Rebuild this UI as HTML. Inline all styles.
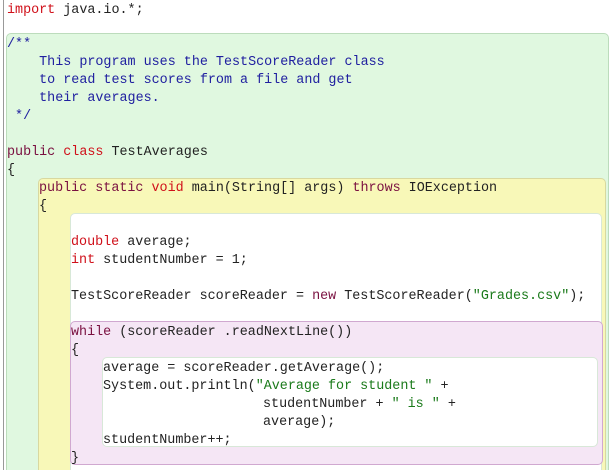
<!DOCTYPE html>
<html style="overflow:hidden;height:470px"><head><style>
body{margin:0;width:609px;height:470px;overflow:hidden;background:#fff;position:relative;font-family:"Liberation Mono",monospace;font-size:13.4px;color:#222}
.b{position:absolute;border-radius:5px;box-sizing:border-box}
.l{position:absolute;white-space:pre;line-height:18px;height:18px}
.k{color:#d0101a}.m{color:#7a1040}.c{color:#2020a0}.s{color:#1a7a1a}
</style></head><body>
<div style="position:absolute;left:3px;top:0;width:1px;height:470px;background:#999"></div>
<div class="b" style="left:6px;top:33px;width:603px;height:445px;background:#e0f8e0;border:1px solid #bcdcbc"></div>
<div class="b" style="left:38px;top:178px;width:568px;height:300px;background:#f8f8b8;border:1px solid #d8d8a0"></div>
<div class="b" style="left:70px;top:213px;width:532px;height:265px;background:#fff;border:1px solid #d8e8d8"></div>
<div class="b" style="left:70px;top:321px;width:533px;height:144px;background:#f5e6f5;border:1px solid #d0a8d0"></div>
<div class="b" style="left:102px;top:357px;width:496px;height:90px;background:#fff;border:1px solid #d8e8d8"></div>

<div class="l" style="left:7px;top:2px"><span class="k">import</span> java.io.*;</div>
<div class="l c" style="left:7px;top:36px">/**</div>
<div class="l c" style="left:7px;top:54px">    This program uses the TestScoreReader class</div>
<div class="l c" style="left:7px;top:72px">    to read test scores from a file and get</div>
<div class="l c" style="left:7px;top:90px">    their averages.</div>
<div class="l c" style="left:7px;top:108px"> */</div>
<div class="l" style="left:7px;top:144px"><span class="m">public</span> <span class="k">class</span> TestAverages</div>
<div class="l" style="left:7px;top:162px">{</div>
<div class="l" style="left:39px;top:180px"><span class="m">public static</span> <span class="k">void</span> main(String[] args) <span class="m">throws</span> IOException</div>
<div class="l" style="left:39px;top:198px">{</div>
<div class="l" style="left:71px;top:234px"><span class="k">double</span> average;</div>
<div class="l" style="left:71px;top:252px"><span class="k">int</span> studentNumber = 1;</div>
<div class="l" style="left:71px;top:288px">TestScoreReader scoreReader = <span class="m">new</span> TestScoreReader(<span class="s">"Grades.csv"</span>);</div>
<div class="l" style="left:71px;top:324px"><span class="m">while</span> (scoreReader .readNextLine())</div>
<div class="l" style="left:71px;top:342px">{</div>
<div class="l" style="left:103px;top:360px">average = scoreReader.getAverage();</div>
<div class="l" style="left:103px;top:378px">System.out.println(<span class="s">"Average for student "</span> +</div>
<div class="l" style="left:263px;top:396px">studentNumber + <span class="s">" is "</span> +</div>
<div class="l" style="left:263px;top:414px">average);</div>
<div class="l" style="left:103px;top:432px">studentNumber++;</div>
<div class="l" style="left:71px;top:450px">}</div>
</body></html>
